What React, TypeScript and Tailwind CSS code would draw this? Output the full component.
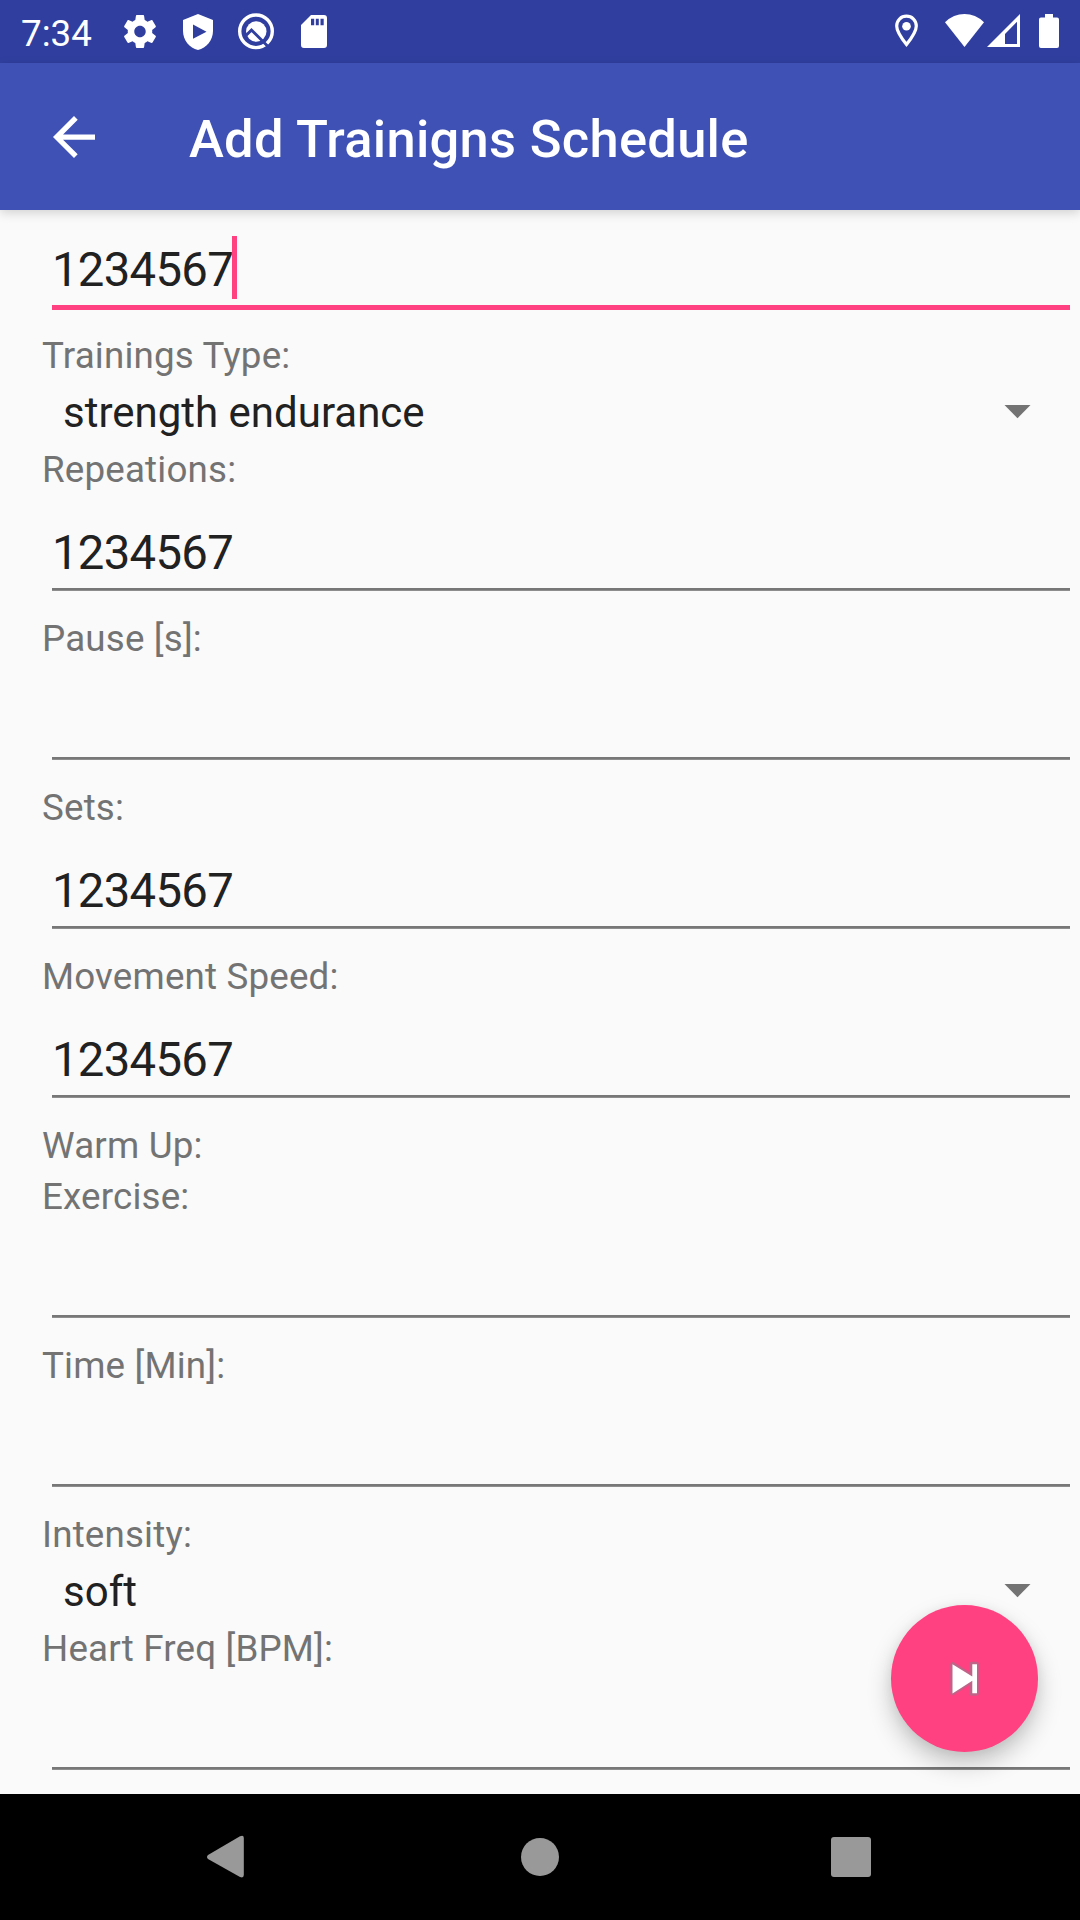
import React from "react";

function Label({ children }: { children: React.ReactNode }) {
  return (
    <div className="h-[51px] whitespace-nowrap pl-[42px] text-[36.75px] leading-[53px] tracking-[0.17px] text-[#737373]">
      {children}
    </div>
  );
}

function Field({ value = "", focused = false }: { value?: string; focused?: boolean }) {
  return (
    <div className="relative h-[118px] pl-[52px] text-[47.25px] leading-[118px] tracking-[-0.7px] text-[#212121]">
      <div className="flex h-[118px]">
        {value}
        {focused && <span className="mt-[25px] -ml-px h-[63px] w-[5px] bg-[#ff4081]" />}
      </div>
      <div
        className={
          focused
            ? "absolute top-[94px] right-[10px] left-[52px] h-[5px] bg-[#ff4081]"
            : "absolute top-[94px] right-[10px] left-[52px] h-[3px] border-b border-[#8d8d8d] bg-[#777777]"
        }
      />
    </div>
  );
}

function Spinner({ value }: { value: string }) {
  return (
    <div className="flex h-[63px] items-start justify-between pr-[49px] pl-[63px] text-[42px] leading-[65px] text-[#212121]">
      <span>{value}</span>
      <svg className="mt-[25px] h-[14px] w-[27px]" viewBox="0 0 27 14" fill="#737373">
        <path d="M.5 0H26.5L13.5 13.3Z" />
      </svg>
    </div>
  );
}

function StatusBar() {
  return (
    <div className="flex h-[63px] items-start bg-[#303f9f] text-white">
      <span className="ml-[21px] w-[103px] text-[36.75px] leading-[68px]">7:34</span>
      <svg className="mt-[15px] h-[33px] w-[32px]" viewBox="2.2 2 19.6 20" preserveAspectRatio="none" fill="currentColor">
        <path d="M19.43 12.98c.04-.32.07-.64.07-.98s-.03-.66-.07-.98l2.11-1.65c.19-.15.24-.42.12-.64l-2-3.46c-.12-.22-.39-.3-.61-.22l-2.49 1c-.52-.4-1.08-.73-1.69-.98l-.38-2.65A.488.488 0 0 0 14 2h-4c-.25 0-.46.18-.49.42l-.38 2.65c-.61.25-1.17.59-1.69.98l-2.49-1c-.23-.09-.49 0-.61.22l-2 3.46c-.13.22-.07.49.12.64l2.11 1.65c-.04.32-.07.65-.07.98s.03.66.07.98l-2.11 1.65c-.19.15-.24.42-.12.64l2 3.46c.12.22.39.3.61.22l2.49-1c.52.4 1.08.73 1.69.98l.38 2.65c.03.24.24.42.49.42h4c.25 0 .46-.18.49-.42l.38-2.65c.61-.25 1.17-.59 1.69-.98l2.49 1c.23.09.49 0 .61-.22l2-3.46c.12-.22.07-.49-.12-.64l-2.11-1.65zM12 15.5c-1.93 0-3.5-1.57-3.5-3.5s1.57-3.5 3.5-3.5 3.5 1.57 3.5 3.5-1.57 3.5-3.5 3.5z" />
      </svg>
      <svg className="mt-[14px] ml-[27px] h-[36px] w-[30px]" viewBox="0 0 30 36" fill="currentColor" fillRule="evenodd">
        <path d="M15 0 30 6V17C30 26 23.500 34 15 36 6.500 34 0 26 0 17V6ZM10 10.500V24.800L23.500 17.700Z" />
      </svg>
      <svg className="mt-[13px] ml-[25px] h-[37px] w-[36px]" viewBox="0 0 36 37" fill="none">
        <circle cx="18" cy="18.300" r="16.300" stroke="currentColor" strokeWidth="3.400" />
        <circle cx="18.300" cy="18.500" r="10.200" fill="currentColor" />
        <path d="M8.200 22.300 13.500 17 29.500 33" stroke="#303f9f" strokeWidth="3" />
      </svg>
      <svg className="mt-[15px] ml-[27px] h-[33px] w-[26px]" viewBox="0 0 26 33" fill="currentColor" fillRule="evenodd">
        <path d="M10 0H23Q26 0 26 3V30Q26 33 23 33H3Q0 33 0 30V10ZM10 3.800V10.300H13.200V3.800ZM14.800 3.800V10.300H17.800V3.800ZM19.500 3.800V10.300H22.700V3.800Z" />
      </svg>
      <svg className="mt-[14px] ml-auto h-[34px] w-[24px]" viewBox="0 0 24 34">
        <path d="M11.500 2.200C5.900 2.200 1.700 6.500 1.700 12.100 1.700 18.500 11.500 30.500 11.500 30.500S21.300 18.500 21.300 12.100C21.300 6.500 17.100 2.200 11.500 2.200Z" fill="none" stroke="currentColor" strokeWidth="3.200" />
        <circle cx="11.500" cy="12.300" r="4.300" fill="currentColor" />
      </svg>
      <svg className="mt-[14px] ml-[26px] h-[33px] w-[39px]" viewBox="0 0 39 33" fill="currentColor">
        <path d="M0 8.200Q8.500 0 19.500 0T39 8.200L19.500 33Z" />
      </svg>
      <svg className="mt-[14px] ml-[3px] h-[33px] w-[33px]" viewBox="0 0 33 33" fill="currentColor" fillRule="evenodd">
        <path d="M33 0V33H0ZM30 7.800 18 20V30H30Z" />
      </svg>
      <svg className="mt-[14px] mr-[21px] ml-[19px] h-[34px] w-[20px]" viewBox="0 0 20 34" fill="currentColor">
        <path d="M6 0H14V3.500H18Q20 3.500 20 5.500V32Q20 34 18 34H2Q0 34 0 32V5.500Q0 3.500 2 3.500H6Z" />
      </svg>
    </div>
  );
}

function NavBar() {
  return (
    <div className="flex h-[126px] items-start bg-black text-[#999999]">
      <svg className="mt-[41px] ml-[207px] h-[44px] w-[37px]" viewBox="0 0 37 44" fill="currentColor">
        <path d="M1 20 33 1.300Q36.800-.500 36.800 3V40Q36.800 43.500 33 42L1 24Q-1 22 1 20Z" />
      </svg>
      <div className="mt-[44px] ml-[277px] size-[38px] rounded-full bg-current" />
      <div className="mt-[43px] ml-[272px] h-[40px] w-[40px] rounded-[3px] bg-current" />
    </div>
  );
}

export default function App() {
  return (
    <div className="relative flex h-[1920px] w-[1080px] flex-col overflow-hidden bg-[#fafafa] font-['Roboto',sans-serif]">
      <StatusBar />
      <header className="z-10 flex h-[147px] items-start bg-[#3f51b5] text-white shadow-[0_3px_10px_rgba(0,0,0,0.16)]">
        <svg className="mt-[52.5px] ml-[53px] h-[42px] w-[42px]" viewBox="4 4 16 16" fill="currentColor">
          <path d="M20 11H7.830l5.590-5.590L12 4l-8 8 8 8 1.410-1.410L7.830 13H20v-2z" />
        </svg>
        <h1 className="ml-[94px] text-[52.5px] leading-[152px] font-medium tracking-[0.27px] whitespace-nowrap">Add Trainigns Schedule</h1>
      </header>
      <main className="h-[1584px] overflow-hidden pt-px">
        <Field value="1234567" focused />
        <Label>Trainings Type:</Label>
        <Spinner value="strength endurance" />
        <Label>Repeations:</Label>
        <Field value="1234567" />
        <Label>Pause [s]:</Label>
        <Field />
        <Label>Sets:</Label>
        <Field value="1234567" />
        <Label>Movement Speed:</Label>
        <Field value="1234567" />
        <Label>Warm Up:</Label>
        <Label>Exercise:</Label>
        <Field />
        <Label>Time [Min]:</Label>
        <Field />
        <Label>Intensity:</Label>
        <Spinner value="soft" />
        <Label>Heart Freq [BPM]:</Label>
        <Field />
      </main>
      <NavBar />
      <button
        aria-label="Next"
        className="absolute top-[1605px] left-[891px] flex size-[147px] items-center justify-center rounded-full bg-[#ff4081] shadow-[0_12px_24px_rgba(0,0,0,0.22),0_2px_12px_rgba(0,0,0,0.06)]"
      >
        <svg className="h-[36px] w-[32px]" viewBox="0.7 0.3 32 36">
          <path d="M4.500 4V32L23.500 20V32.500H28V3.500H23.500V16Z" fill="#bf6487" stroke="#bf6487" strokeWidth="5" strokeLinejoin="round" />
          <path d="M4.200 3.500V32.800L24 20V32.500H28.700V3.500H24V15.800Z" fill="#fff" />
        </svg>
      </button>
    </div>
  );
}
